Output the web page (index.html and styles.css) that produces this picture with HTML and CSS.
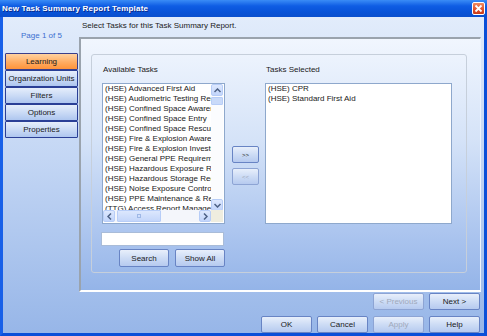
FILE: index.html
```html
<!DOCTYPE html>
<html lang="en">
    <head>
        <meta charset="UTF-8">
        <title>New Task Summary Report Template</title>
        <link rel="stylesheet" href="styles.css">
    </head>
    <body>
        <div class="window">
            <div class="titlebar">
                <span class="title">New Task Summary Report Template</span>
                <span class="close">
                    <svg width="9" height="9" viewBox="0 0 9 9"><path d="M1.5 1.5 L7.5 7.5 M7.5 1.5 L1.5 7.5" stroke="#fff" stroke-width="1.8"/></svg>
                </span>
            </div>
            <div class="frame">
                <div class="client">
                    <div class="sidebar">
                        <div class="page-label">Page 1 of 5</div>
                        <div class="nav-btn active">Learning</div>
                        <div class="nav-btn">Organization Units</div>
                        <div class="nav-btn">Filters</div>
                        <div class="nav-btn">Options</div>
                        <div class="nav-btn">Properties</div>
                    </div>
                    <div class="main">
                        <div class="instruction">Select Tasks for this Task Summary Report.</div>
                        <div class="panel">
                            <div class="group">
                                <div class="col-left">
                                    <div class="label">Available Tasks</div>
                                    <div class="listbox available">
                                        <div class="items">
                                            <div>(HSE) Advanced First Aid</div>
                                            <div>(HSE) Audiometric Testing Requirements</div>
                                            <div>(HSE) Confined Space Awareness</div>
                                            <div>(HSE) Confined Space Entry</div>
                                            <div>(HSE) Confined Space Rescue</div>
                                            <div>(HSE) Fire &amp; Explosion Awareness</div>
                                            <div>(HSE) Fire &amp; Explosion Investigation</div>
                                            <div>(HSE) General PPE Requirements</div>
                                            <div>(HSE) Hazardous Exposure Response</div>
                                            <div>(HSE) Hazardous Storage Req.</div>
                                            <div>(HSE) Noise Exposure Control</div>
                                            <div>(HSE) PPE Maintenance &amp; Repair</div>
                                            <div>(TTG) Access Report Manager</div>
                                        </div>
                                        <div class="vscroll">
                                            <div class="sb-btn"><svg width="7" height="5" viewBox="0 0 7 5"><path d="M0.5 4 L3.5 1 L6.5 4" fill="none" stroke="#4d6185" stroke-width="1.5"/></svg></div>
                                            <div class="sb-thumb-v"></div>
                                            <div class="sb-track"></div>
                                            <div class="sb-btn"><svg width="7" height="5" viewBox="0 0 7 5"><path d="M0.5 1 L3.5 4 L6.5 1" fill="none" stroke="#4d6185" stroke-width="1.5"/></svg></div>
                                        </div>
                                        <div class="hscroll">
                                            <div class="sb-btn"><svg width="5" height="7" viewBox="0 0 5 7"><path d="M4 0.5 L1 3.5 L4 6.5" fill="none" stroke="#4d6185" stroke-width="1.5"/></svg></div>
                                            <div class="sb-thumb-h"><span class="grip"></span></div>
                                            <div class="sb-track"></div>
                                            <div class="sb-btn"><svg width="5" height="7" viewBox="0 0 5 7"><path d="M1 0.5 L4 3.5 L1 6.5" fill="none" stroke="#4d6185" stroke-width="1.5"/></svg></div>
                                        </div>
                                        <div class="sb-corner"></div>
                                    </div>
                                    <div class="search-box"></div>
                                    <div class="search-row">
                                        <div class="btn">Search</div>
                                        <div class="btn">Show All</div>
                                    </div>
                                </div>
                                <div class="mover">
                                    <div class="btn small">&gt;&gt;</div>
                                    <div class="btn small disabled">&lt;&lt;</div>
                                </div>
                                <div class="col-right">
                                    <div class="label">Tasks Selected</div>
                                    <div class="listbox selected">
                                        <div class="items">
                                            <div>(HSE) CPR</div>
                                            <div>(HSE) Standard First Aid</div>
                                        </div>
                                    </div>
                                </div>
                            </div>
                        </div>
                        <div class="wizard-nav">
                            <div class="btn wide disabled">&lt; Previous</div>
                            <div class="btn wide">Next &gt;</div>
                        </div>
                        <div class="footer">
                            <div class="btn wide">OK</div>
                            <div class="btn wide">Cancel</div>
                            <div class="btn wide disabled">Apply</div>
                            <div class="btn wide">Help</div>
                        </div>
                    </div>
                </div>
            </div>
        </div>
    </body>
</html>
```

FILE: styles.css
```css
* {
    box-sizing: border-box;
}

body {
    margin: 0;
    font-family: "Liberation Sans", Arial, sans-serif;
    font-size: 8px;
    color: #1a1a1a;
    background: #fff;
}

.window {
    width: 487px;
    height: 336px;
    display: flex;
    flex-direction: column;
}

.titlebar {
    height: 17px;
    display: flex;
    align-items: center;
    justify-content: space-between;
    padding: 0 2px 0 2px;
    background: linear-gradient(180deg, #3a8cf6 0%, #0f5de4 35%, #0853d8 70%, #0a4fcd 100%);
}

.title {
    color: #fff;
    font-weight: bold;
    font-size: 8px;
    letter-spacing: 0.2px;
    text-shadow: 1px 1px 0 #0a2a8a;
}

.close {
    width: 13px;
    height: 13px;
    border: 1px solid #fff;
    border-radius: 2px;
    background: linear-gradient(180deg, #f08a60 0%, #e0502a 60%, #c83a18 100%);
    display: flex;
    align-items: center;
    justify-content: center;
}

.frame {
    flex: 1;
    border: 3px solid #0a4fd8;
    border-top: none;
    border-left-color: #1860e8;
    background: linear-gradient(180deg, #e2ecfb 0%, #c3d6f4 45%, #97b6e8 100%);
}

.client {
    display: flex;
    height: 100%;
}

.sidebar {
    width: 76px;
    padding: 0 1px 0 2px;
}

.page-label {
    height: 36px;
    color: #3d6fd0;
    text-align: center;
    padding-top: 14px;
    font-size: 8px;
}

.nav-btn {
    height: 17px;
    border: 1px solid #2a3f96;
    border-radius: 1px;
    background: linear-gradient(180deg, #e6eefb 0%, #c8d9f5 55%, #aec6ef 100%);
    display: flex;
    align-items: center;
    justify-content: center;
    font-size: 8px;
}

.nav-btn.active {
    background: linear-gradient(180deg, #ffd2a0 0%, #ffac62 55%, #ff943a 100%);
    border-color: #3a3f8a;
}

.main {
    flex: 1;
    display: flex;
    flex-direction: column;
    padding-right: 3px;
}

.instruction {
    height: 20px;
    padding: 4px 0 0 3px;
}

.panel {
    height: 255px;
    border-top: 2px solid #9aa3ad;
    border-left: 2px solid #9aa3ad;
    border-bottom: 2px solid #fff;
    border-right: 1px solid #eef3fb;
    background: linear-gradient(180deg, #f1f6fe 0%, #d5e3f8 40%, #a9c3ee 80%, #94b4e8 100%);
    padding: 15px 0 0 10px;
}

.group {
    width: 376px;
    height: 219px;
    border: 1px solid #c6cfdb;
    border-radius: 3px;
    display: grid;
    grid-template-columns: 123px 40px 187px;
    padding: 0 0 0 10px;
}

.label {
    height: 28px;
    padding: 10px 0 0 1px;
}

.listbox {
    background: #fff;
    border: 1px solid #8ea8cc;
    height: 141px;
    position: relative;
    overflow: hidden;
}

.items {
    line-height: 10px;
    white-space: nowrap;
    padding-left: 2px;
    overflow: hidden;
}

.available .items {
    width: 108px;
    height: 127px;
}

.vscroll {
    position: absolute;
    right: 1px;
    top: 0;
    width: 12px;
    height: 127px;
    display: flex;
    flex-direction: column;
    background: #fbfcfe;
}

.hscroll {
    position: absolute;
    left: 0;
    bottom: 1px;
    width: 108px;
    height: 12px;
    display: flex;
    background: #f4f6fb;
}

.sb-btn {
    width: 12px;
    height: 12px;
    flex: none;
    border: 1px solid #b7cdf7;
    border-radius: 2px;
    background: linear-gradient(180deg, #dde8fe 0%, #c2d5fb 100%);
    display: flex;
    align-items: center;
    justify-content: center;
}

.sb-thumb-v {
    height: 8px;
    margin-top: 1px;
    border: 1px solid #b7cdf7;
    border-radius: 1px;
    background: #c9daf9;
}

.sb-thumb-h {
    width: 44px;
    margin-left: 2px;
    border: 1px solid #b7cdf7;
    border-radius: 1px;
    background: linear-gradient(180deg, #dce7fd 0%, #c4d6fa 100%);
    display: flex;
    align-items: center;
    justify-content: center;
}

.grip {
    width: 4px;
    height: 4px;
    border: 1px solid #9fb8e6;
}

.sb-track {
    flex: 1;
}

.sb-corner {
    position: absolute;
    right: 1px;
    bottom: 1px;
    width: 12px;
    height: 12px;
    background: #efeddf;
}

.search-box {
    width: 123px;
    height: 14px;
    margin: 8px 0 0 -1px;
    background: #fff;
    border: 1px solid #a9bcd8;
}

.search-row {
    display: flex;
    justify-content: flex-end;
    gap: 6px;
    margin-top: 3px;
}

.search-row .btn {
    width: 50px;
    height: 18px;
}

.btn {
    border: 1px solid #6884c4;
    border-radius: 2px;
    background: linear-gradient(180deg, #e8effb 0%, #cddcf5 50%, #b6caef 100%);
    display: flex;
    align-items: center;
    justify-content: center;
    font-size: 8px;
}

.btn.disabled {
    color: #9fa9bb;
    border-color: #8da4d4;
}

.mover {
    display: flex;
    flex-direction: column;
    gap: 5px;
    padding: 91px 0 0 7px;
}

.btn.small {
    width: 27px;
    height: 17px;
    font-size: 6px;
}

.selected .items {
    padding-left: 2px;
}

.wizard-nav,
.footer {
    display: flex;
    justify-content: flex-end;
    gap: 5px;
    padding-right: 1px;
}

.wizard-nav {
    margin-top: 1px;
}

.footer {
    margin-top: 6px;
}

.btn.wide {
    width: 51px;
    height: 17px;
}
```
